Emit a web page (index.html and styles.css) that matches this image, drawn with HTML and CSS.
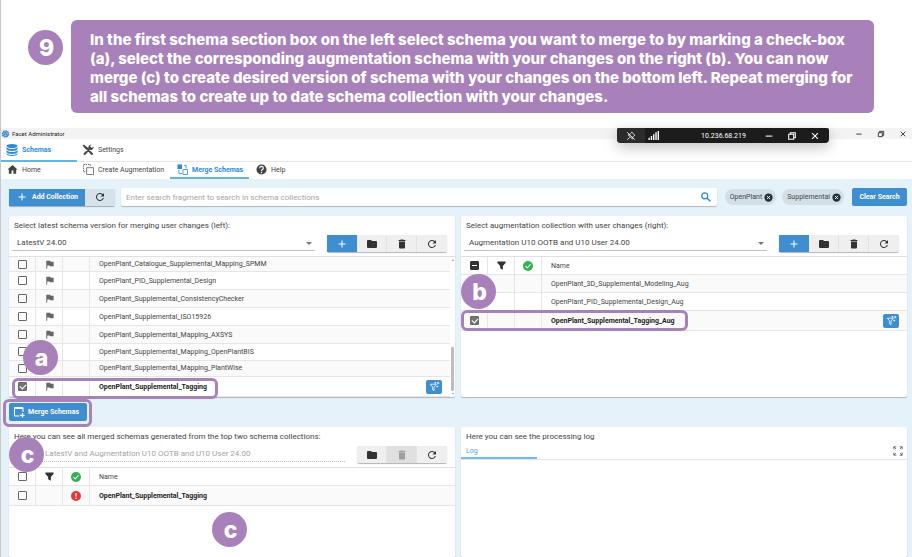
FILE: index.html
```html
<!DOCTYPE html>
<html lang="en">
<head>
    <meta charset="utf-8">
    <title>Facet Administrator - Merge Schemas</title>
    <link rel="stylesheet" href="styles.css">
</head>
<body>
    <svg class="sprite" aria-hidden="true">
        <symbol id="plus" viewBox="0 0 24 24"><path d="M19 13h-6v6h-2v-6H5v-2h6V5h2v6h6z"/></symbol>
        <symbol id="refresh" viewBox="0 0 24 24"><path d="M17.65 6.35A8 8 0 1 0 19.73 14h-2.08A6 6 0 1 1 12 6c1.66 0 3.14.69 4.22 1.78L13 11h7V4z"/></symbol>
        <symbol id="folder" viewBox="0 0 24 24"><path d="M10 4H4a2 2 0 0 0-2 2v12a2 2 0 0 0 2 2h16a2 2 0 0 0 2-2V8a2 2 0 0 0-2-2h-8z"/></symbol>
        <symbol id="trash" viewBox="0 0 24 24"><path d="M6 19a2 2 0 0 0 2 2h8a2 2 0 0 0 2-2V7H6zM19 4h-3.5l-1-1h-5l-1 1H5v2h14z"/></symbol>
        <symbol id="flag" viewBox="0 0 24 24"><path d="M14.4 6 14 4H5v17h2v-7h5.600l.4 2h8V6z"/></symbol>
        <symbol id="funnel" viewBox="0 0 24 24"><path d="M3 3h18v3l-6 7v8l-6-3v-5L3 6z"/></symbol>
        <symbol id="ok" viewBox="0 0 24 24"><circle cx="12" cy="12" r="12" fill="#2eb34f"/><path d="M6 12.500l4 4 8-8.500" fill="none" stroke="#fff" stroke-width="2.600"/></symbol>
        <symbol id="alert" viewBox="0 0 24 24"><circle cx="12" cy="12" r="12" fill="#e53935"/><path d="M10.500 5h3v9h-3zM10.500 16h3v3h-3z" fill="#fff"/></symbol>
        <symbol id="close" viewBox="0 0 24 24"><path d="M5 5l14 14M19 5L5 19" fill="none" stroke="currentColor" stroke-width="2.500"/></symbol>
        <symbol id="minimize" viewBox="0 0 24 24"><path d="M4 11h16v2.500H4z"/></symbol>
        <symbol id="restore" viewBox="0 0 24 24"><path d="M4 8h12v12H4zM8 8V4h12v12h-4" fill="none" stroke="currentColor" stroke-width="2.500"/></symbol>
        <symbol id="remove" viewBox="0 0 24 24"><circle cx="12" cy="12" r="11"/><path d="M8 8l8 8M16 8l-8 8" fill="none" stroke="#fff" stroke-width="2.500"/></symbol>
        <symbol id="magic" viewBox="0 0 24 24"><path d="M3 7h13l-5 6v8l-3-2v-6zM14 2v4M12 4h4M20 2v5M17.500 4.500h5M18 10v4M16 12h4" fill="none" stroke="currentColor" stroke-width="1.700"/></symbol>
    </svg>

    <header class="banner">
        <span class="step">9</span>
        <p>In the first schema section box on the left select schema you want to merge to by marking a check-box (a), select the corresponding augmentation schema with your changes on the right (b). You can now merge (c) to create desired version of schema with your changes on the bottom left. Repeat merging for all schemas to create up to date schema collection with your changes.</p>
    </header>

    <div class="app">
        <div class="titlebar">
            <svg class="logo" viewBox="0 0 24 24"><circle cx="12" cy="13" r="8" fill="#2478bd" stroke="#3a8fd0" stroke-width="4" stroke-dasharray="4 2"/><path d="M7 10l5-3 5 3v6l-5 3-5-3zM12 13v6M7 10l5 3 5-3" fill="none" stroke="#b9dcf5" stroke-width="1.500"/></svg>
            <span class="app-name">Facet Administrator</span>
            <div class="window-buttons">
                <button aria-label="Minimize"><svg><use href="#minimize"/></svg></button>
                <button aria-label="Restore"><svg><use href="#restore"/></svg></button>
                <button aria-label="Close"><svg><use href="#close"/></svg></button>
            </div>
            <div class="remote-bar">
                <button class="pin" aria-label="Unpin"><svg viewBox="0 0 24 24"><path d="M3 3l18 18M3 21l6-6M5 9l10 10 1-5M10 7l4-4 7 7-4 4M5 9h5" fill="none" stroke="currentColor" stroke-width="2"/></svg></button>
                <svg class="signal" viewBox="0 0 24 24"><path d="M1 17h3v5H1zM6 13h3v9H6zM11 9h3v13h-3zM16 5h3v17h-3zM21 2h3v20h-3z"/></svg>
                <span class="address">10.236.68.219</span>
                <button aria-label="Minimize session"><svg><use href="#minimize"/></svg></button>
                <button aria-label="Restore session"><svg><use href="#restore"/></svg></button>
                <button aria-label="Close session"><svg><use href="#close"/></svg></button>
            </div>
        </div>

        <nav class="tabs main-tabs">
            <a class="active" href="#"><svg viewBox="0 0 24 24"><ellipse cx="12" cy="4" rx="11" ry="4"/><path d="M1 6c2 3 6 4 11 4s9-1 11-4v4c0 5-22 5-22 0zM1 12c2 3 6 4 11 4s9-1 11-4v4c0 5-22 5-22 0zM1 18c2 3 6 4 11 4s9-1 11-4v2c0 5-22 5-22 0z"/></svg>Schemas</a>
            <a href="#"><svg viewBox="0 0 24 24"><path d="M5 20L17 8M8 7l12 13" fill="none" stroke="currentColor" stroke-width="4" stroke-linecap="round"/><path d="M1 3l3-2 7 7-3 3zM23 5l-3 3-3-1-1-3 3-3a6 6 0 0 0-6 8l3 3a6 6 0 0 0 7-7z"/></svg>Settings</a>
        </nav>
        <nav class="tabs sub-tabs">
            <a href="#"><svg viewBox="0 0 24 24"><path d="M10 21v-7h4v7h6v-9h3L12 2 1 12h3v9z"/></svg>Home</a>
            <a href="#"><svg viewBox="0 0 24 24"><path d="M8 8h15v15H8z" fill="none" stroke="currentColor" stroke-width="1.500"/><path d="M5 17H1V1h15v4" fill="none" stroke="currentColor" stroke-width="1.800" stroke-dasharray="3 2"/></svg>Create Augmentation</a>
            <a class="active" href="#"><svg viewBox="0 0 24 24"><path d="M1 1h10v10H1z"/><path d="M13 12h10v11H13zM4 13v8h7M15 3h5v7" fill="none" stroke="currentColor" stroke-width="1.800"/></svg>Merge Schemas</a>
            <a href="#"><svg viewBox="0 0 24 24"><circle cx="12" cy="12" r="11"/><path d="M8 9c0-5 8-5 8 0 0 3-4 3-4 6M12 17v3" fill="none" stroke="#fff" stroke-width="2.500"/></svg>Help</a>
        </nav>

        <main class="workspace">
            <div class="toolbar">
                <div class="button-group">
                    <button class="primary add"><svg><use href="#plus"/></svg>Add Collection</button>
                    <button class="soft" aria-label="Reload collections"><svg><use href="#refresh"/></svg></button>
                </div>
                <label class="search">
                    <input type="text" aria-label="Search" placeholder="Enter search fragment to search in schema collections">
                    <svg viewBox="0 0 24 24"><circle cx="9.500" cy="9.500" r="6" fill="none" stroke="currentColor" stroke-width="2.500"/><path d="M14 14l7 7" stroke="currentColor" stroke-width="3"/></svg>
                </label>
                <div class="chips">
                    <span class="chip">OpenPlant<button aria-label="Remove OpenPlant"><svg><use href="#remove"/></svg></button></span>
                    <span class="chip">Supplemental<button aria-label="Remove Supplemental"><svg><use href="#remove"/></svg></button></span>
                </div>
                <button class="primary clear">Clear Search</button>
            </div>

            <div class="columns">
                <section class="panel">
                    <label class="panel-title" for="latest">Select latest schema version for merging user changes (left):</label>
                    <div class="picker">
                        <div class="select"><select id="latest"><option>LatestV 24.00</option></select></div>
                        <div class="button-group">
                            <button class="primary" aria-label="Add"><svg><use href="#plus"/></svg></button>
                            <button aria-label="Open"><svg><use href="#folder"/></svg></button>
                            <button aria-label="Delete"><svg><use href="#trash"/></svg></button>
                            <button aria-label="Reload"><svg><use href="#refresh"/></svg></button>
                        </div>
                    </div>
                    <div class="list">
                        <table class="schemas scrolled">
                            <tr class="cut shaded"><td><input type="checkbox" aria-label="Select"></td><td><svg><use href="#flag"/></svg></td><td></td><td>OpenPlant_Catalogue_Supplemental_Mapping_SPMM</td></tr>
                            <tr><td><input type="checkbox" aria-label="Select"></td><td><svg><use href="#flag"/></svg></td><td></td><td>OpenPlant_PID_Supplemental_Design</td></tr>
                            <tr class="shaded"><td><input type="checkbox" aria-label="Select"></td><td><svg><use href="#flag"/></svg></td><td></td><td>OpenPlant_Supplemental_ConsistencyChecker</td></tr>
                            <tr><td><input type="checkbox" aria-label="Select"></td><td><svg><use href="#flag"/></svg></td><td></td><td>OpenPlant_Supplemental_ISO15926</td></tr>
                            <tr class="shaded"><td><input type="checkbox" aria-label="Select"></td><td><svg><use href="#flag"/></svg></td><td></td><td>OpenPlant_Supplemental_Mapping_AXSYS</td></tr>
                            <tr><td><input type="checkbox" aria-label="Select"></td><td></td><td></td><td>OpenPlant_Supplemental_Mapping_OpenPlantBIS</td></tr>
                            <tr class="shaded"><td><input type="checkbox" aria-label="Select"></td><td></td><td></td><td>OpenPlant_Supplemental_Mapping_PlantWise</td></tr>
                            <tr class="selected"><td><input type="checkbox" aria-label="Select" checked></td><td><svg><use href="#flag"/></svg></td><td></td><td><div class="cell">OpenPlant_Supplemental_Tagging<button class="primary magic" aria-label="Filter"><svg><use href="#magic"/></svg></button></div></td></tr>
                        </table>
                        <div class="scrollbar"><i></i></div>
                    </div>
                    <span class="outline outline-a"></span>
                    <span class="step mark mark-a">a</span>
                </section>

                <section class="panel">
                    <label class="panel-title" for="augmentation">Select augmentation collection with user changes (right):</label>
                    <div class="picker">
                        <div class="select"><select id="augmentation"><option>Augmentation U10 OOTB and U10 User 24.00</option></select></div>
                        <div class="button-group">
                            <button class="primary" aria-label="Add"><svg><use href="#plus"/></svg></button>
                            <button aria-label="Open"><svg><use href="#folder"/></svg></button>
                            <button aria-label="Delete"><svg><use href="#trash"/></svg></button>
                            <button aria-label="Reload"><svg><use href="#refresh"/></svg></button>
                        </div>
                    </div>
                    <div class="list">
                        <table class="schemas">
                            <tr><th><input class="partial" type="checkbox" aria-label="Select all"></th><th><svg><use href="#funnel"/></svg></th><th><svg class="state"><use href="#ok"/></svg></th><th>Name</th></tr>
                            <tr class="shaded"><td></td><td></td><td></td><td>OpenPlant_3D_Supplemental_Modeling_Aug</td></tr>
                            <tr><td></td><td></td><td></td><td>OpenPlant_PID_Supplemental_Design_Aug</td></tr>
                            <tr class="selected shaded"><td><input type="checkbox" aria-label="Select" checked></td><td></td><td></td><td><div class="cell">OpenPlant_Supplemental_Tagging_Aug<button class="primary magic" aria-label="Filter"><svg><use href="#magic"/></svg></button></div></td></tr>
                        </table>
                    </div>
                    <span class="outline outline-b"></span>
                    <span class="step mark mark-b">b</span>
                </section>
            </div>

            <div class="merge-row">
                <div class="merge-wrap">
                    <button class="primary merge"><svg viewBox="0 0 24 24"><path d="M13 20H3V3h17v9M3 5h17" fill="none" stroke="currentColor" stroke-width="2"/><path d="M19 14v9M14 18.500h9" stroke="currentColor" stroke-width="2.500"/></svg>Merge Schemas</button>
                    <span class="outline outline-c"></span>
                </div>
            </div>

            <div class="columns results">
                <section class="panel">
                    <label class="panel-title" for="merged">Here you can see all merged schemas generated from the top two schema collections:</label>
                    <div class="picker">
                        <div class="select disabled"><select id="merged" disabled><option>LatestV and Augmentation U10 OOTB and U10 User 24.00</option></select></div>
                        <div class="button-group">
                            <button aria-label="Open"><svg><use href="#folder"/></svg></button>
                            <button aria-label="Delete" disabled><svg><use href="#trash"/></svg></button>
                            <button aria-label="Reload"><svg><use href="#refresh"/></svg></button>
                        </div>
                    </div>
                    <div class="list">
                        <table class="schemas">
                            <tr><th><input type="checkbox" aria-label="Select all"></th><th><svg><use href="#funnel"/></svg></th><th><svg class="state"><use href="#ok"/></svg></th><th>Name</th></tr>
                            <tr class="selected shaded"><td><input type="checkbox" aria-label="Select"></td><td></td><td><svg class="state"><use href="#alert"/></svg></td><td>OpenPlant_Supplemental_Tagging</td></tr>
                        </table>
                    </div>
                    <span class="step mark mark-c">c</span>
                    <span class="step mark mark-result">c</span>
                </section>

                <section class="panel">
                    <h2 class="panel-title">Here you can see the processing log</h2>
                    <div class="log-tabs">
                        <a class="active" href="#">Log</a>
                        <button aria-label="Expand"><svg viewBox="0 0 24 24"><path d="M2 8V2h6M2 2l5 5M16 2h6v6M22 2l-5 5M2 16v6h6M2 22l5-5M22 16v6h-6M22 22l-5-5" fill="none" stroke="currentColor" stroke-width="2"/></svg></button>
                    </div>
                </section>
            </div>
        </main>
    </div>
</body>
</html>
```

FILE: styles.css
```css
* {
    box-sizing: border-box;
}
body {
    margin: 0;
    min-height: 100vh;
    display: flex;
    flex-direction: column;
    border-left: 1px solid #c8c8c8;
    background: #ffffff;
    color: #444444;
    font-family: Roboto, "Liberation Sans", sans-serif;
    font-size: 7px;
}
button, input, select {
    font: inherit;
    color: inherit;
}
button {
    display: flex;
    align-items: center;
    justify-content: center;
    padding: 0;
    border: 0;
    background: none;
}
svg {
    width: 12px;
    height: 12px;
    fill: currentColor;
    flex: none;
}
.sprite {
    position: absolute;
    width: 0;
    height: 0;
}

/* instruction banner */
.banner {
    display: flex;
    align-items: flex-start;
    padding: 20px 38px 15px 27px;
}
.banner .step {
    margin: 10px 8px 0 0;
}
.banner p {
    flex: 1;
    margin: 0;
    padding: 10px 10px 7px 19px;
    border-radius: 6px;
    background: #a881bb;
    color: #ffffff;
    font: 800 15px/19px Inter, sans-serif;
}
.step {
    display: flex;
    align-items: center;
    justify-content: center;
    flex: none;
    width: 35px;
    height: 35px;
    padding: 1px 0 0 2px;
    border-radius: 50%;
    background: #a881bb;
    color: #ffffff;
    font: 800 23px/23px Inter, sans-serif;
}
.mark {
    position: absolute;
    z-index: 3;
}
.outline {
    position: absolute;
    z-index: 2;
    border: 3px solid #a881bb;
    border-radius: 6px;
    pointer-events: none;
}

/* window */
.app {
    flex: 1;
    display: flex;
    flex-direction: column;
}
.titlebar {
    position: relative;
    display: flex;
    align-items: center;
    height: 11px;
    background: #f3f3f3;
    color: #222222;
    font-size: 6px;
}
.titlebar .logo {
    width: 9px;
    height: 9px;
    margin-right: 2px;
}
.window-buttons {
    display: flex;
    margin-left: auto;
    padding-right: 5px;
    gap: 14px;
}
.window-buttons svg {
    width: 8px;
    height: 8px;
}
.remote-bar {
    position: absolute;
    top: 0;
    right: 83px;
    display: flex;
    align-items: center;
    width: 212px;
    height: 15px;
    padding-right: 9px;
    border-radius: 2px 2px 4px 4px;
    background: #1c1c1c;
    color: #ffffff;
    font-size: 7px;
    box-shadow: 0 4px 14px rgba(0, 0, 0, 0.25);
}
.remote-bar svg {
    width: 10px;
    height: 10px;
}
.remote-bar .pin {
    width: 28px;
    height: 15px;
    border-radius: 2px 0 0 4px;
    background: #2c2c2c;
}
.remote-bar .signal {
    width: 11px;
    height: 11px;
    margin-left: 3px;
}
.remote-bar .address {
    margin: 0 auto;
    padding-left: 24px;
}
.remote-bar button + button {
    margin-left: 13px;
}
.tabs {
    display: flex;
    border-bottom: 1px solid #e6e6e6;
}
.tabs a {
    display: flex;
    align-items: center;
    gap: 4px;
    border-bottom: 2px solid transparent;
    color: #444444;
    text-decoration: none;
}
.tabs .active {
    border-color: #64b5dc;
    color: #2e8bd6;
    font-weight: bold;
}
.main-tabs {
    height: 23px;
}
.main-tabs a {
    width: 76px;
    margin-bottom: -1px;
    padding-left: 5px;
}
.sub-tabs {
    height: 17px;
    border: 0;
}
.sub-tabs a {
    padding: 0 6px 0 7px;
}
.sub-tabs a:first-child {
    width: 75px;
    padding-left: 6px;
}
.sub-tabs svg {
    width: 11px;
    height: 11px;
}

/* workspace */
.workspace {
    flex: 1;
    display: flex;
    flex-direction: column;
    padding: 9px 5px 0 8px;
    background: #e5f2fa;
}
.toolbar {
    display: flex;
    align-items: center;
    height: 18px;
    margin-bottom: 10px;
}
.button-group {
    display: flex;
    height: 17px;
    border-radius: 2px;
    box-shadow: 0 1px 1px rgba(0, 0, 0, 0.3);
}
.button-group button {
    width: 30px;
    background: #efefef;
    color: #333333;
    border-right: 1px solid #e2e2e2;
}
.button-group button:last-child {
    border-right: 0;
}
.button-group button:disabled {
    background: #e0e0e0;
    color: #9e9e9e;
}
button.primary,
.button-group .primary {
    border: 0;
    background: #3f8ed0;
    color: #ffffff;
    font-weight: bold;
}
.button-group .soft {
    background: #d5e2ea;
}
.button-group .add {
    width: 76px;
    gap: 4px;
}
.search {
    flex: 1;
    display: flex;
    align-items: center;
    height: 18px;
    margin: 0 8px 0 6px;
    padding: 0 5px;
    border-radius: 2px;
    background: #ffffff;
    color: #2e8bd6;
    box-shadow: 0 1px 1px rgba(0, 0, 0, 0.25);
}
.search input {
    flex: 1;
    padding: 0;
    border: 0;
    outline: 0;
    background: none;
    font-size: 8px;
}
.search input::placeholder {
    color: #a6a6a6;
}
.chips {
    display: flex;
    gap: 6px;
    margin-right: 8px;
}
.chip {
    display: flex;
    align-items: center;
    gap: 2px;
    height: 16px;
    padding: 0 3px 0 5px;
    border-radius: 8px;
    background: #d3dfe7;
}
.chip svg {
    width: 9px;
    height: 9px;
    color: #263238;
}
.clear {
    width: 55px;
    height: 18px;
    border-radius: 2px;
}
.columns {
    display: grid;
    grid-template-columns: 1fr 1fr;
    gap: 6px;
}
.results {
    flex: 1;
}
.panel {
    position: relative;
    padding-top: 4px;
    border-radius: 2px;
    background: #ffffff;
    box-shadow: 0 1px 1px rgba(0, 0, 0, 0.25);
}
.panel-title {
    display: block;
    margin: 0 0 4px;
    padding-left: 5px;
    font-size: 8px;
    font-weight: normal;
    line-height: 11px;
}
.picker {
    display: flex;
    gap: 12px;
    padding: 0 8px 0 3px;
    margin-bottom: 4px;
}
.select {
    position: relative;
    flex: 1;
    height: 16px;
    border-bottom: 1px solid #c4c4c4;
}
.select::after {
    content: "";
    position: absolute;
    top: 7px;
    right: 3px;
    border: 3px solid transparent;
    border-top-color: #777777;
    border-bottom: 0;
}
.select select {
    width: 100%;
    height: 15px;
    padding: 0 5px;
    border: 0;
    appearance: none;
    background: none;
    font-size: 8px;
}
.select.disabled {
    border-bottom-style: dotted;
}
.select.disabled::after {
    display: none;
}
.select.disabled select {
    padding-left: 33px;
    color: #a3a3a3;
    opacity: 1;
}

/* schema lists */
.list {
    display: flex;
    border-top: 1px solid #e0e0e0;
}
.schemas {
    flex: 1;
    border-collapse: separate;
    border-spacing: 0;
    table-layout: fixed;
}
.schemas td,
.schemas th {
    height: 18px;
    padding: 0 0 0 9px;
    border-bottom: 1px solid #e6e6e6;
    font-weight: normal;
    line-height: 10px;
    text-align: left;
}
.schemas td:not(:last-child),
.schemas th:not(:last-child) {
    width: 27px;
    padding: 0;
    border-right: 1px solid #e6e6e6;
    text-align: center;
}
.schemas svg {
    display: block;
    width: 11px;
    height: 11px;
    margin: 0 auto;
    color: #666666;
}
.schemas th svg {
    color: #333333;
}
.schemas .state {
    width: 10px;
    height: 10px;
}
.schemas .shaded {
    background: #fafafa;
}
.schemas .selected td {
    height: 20px;
    color: #222222;
    font-weight: bold;
}
.scrolled {
    height: 140px;
}
.scrolled td {
    height: auto;
}
.scrolled .cut td {
    height: 15px;
}
.cell {
    display: flex;
    align-items: center;
    justify-content: space-between;
    padding-right: 8px;
}
.schemas .magic {
    width: 16px;
    height: 14px;
    border-radius: 2px;
}
.schemas .magic svg {
    color: #ffffff;
}
input[type="checkbox"] {
    display: block;
    position: relative;
    width: 9px;
    height: 9px;
    margin: 0 auto;
    border: 1px solid #666666;
    border-radius: 1px;
    appearance: none;
}
input[type="checkbox"]:checked {
    background: #757575;
}
input[type="checkbox"]:checked::after {
    content: "";
    position: absolute;
    top: 0;
    left: 2px;
    width: 3px;
    height: 5px;
    border: solid #ffffff;
    border-width: 0 1px 1px 0;
    transform: rotate(45deg);
}
input[type="checkbox"].partial {
    border-color: #333333;
    background: #333333;
}
input.partial::after {
    content: "";
    position: absolute;
    top: 3px;
    left: 1px;
    width: 5px;
    height: 1px;
    background: #ffffff;
}
.scrollbar {
    display: flex;
    flex-direction: column;
    align-items: center;
    justify-content: space-between;
    width: 5px;
    padding: 2px 0;
}
.scrollbar::before,
.scrollbar::after {
    content: "";
    border: 1px solid transparent;
    border-bottom: 2px solid #999999;
    border-top: 0;
}
.scrollbar::after {
    border-top: 2px solid #999999;
    border-bottom: 0;
}
.scrollbar i {
    width: 3px;
    height: 44px;
    margin: auto 0 2px;
    border-radius: 1px;
    background: #bdbdbd;
}

.merge-row {
    padding: 6px 0;
}
.merge-wrap {
    position: relative;
    width: 78px;
}
.merge {
    width: 100%;
    height: 18px;
    padding-right: 4px;
    gap: 3px;
    border-radius: 2px;
}
.log-tabs {
    display: flex;
    justify-content: space-between;
    height: 14px;
    border-bottom: 1px solid #e6e6e6;
}
.log-tabs a {
    width: 76px;
    padding-left: 5px;
    border-bottom: 2px solid #74bbee;
    color: #4aa3e0;
    line-height: 10px;
    text-decoration: none;
}
.log-tabs button {
    width: 18px;
    height: 10px;
    color: #555555;
}
.log-tabs svg {
    width: 10px;
    height: 10px;
}

/* markers over the panels */
.outline-a {
    left: 3px;
    top: 162px;
    width: 206px;
    height: 21px;
}
.outline-b {
    left: 0;
    top: 94px;
    width: 227px;
    height: 21px;
}
.outline-c {
    left: -6px;
    top: -4px;
    width: 89px;
    height: 28px;
}
.mark-a {
    left: 14px;
    top: 124px;
}
.mark-b {
    left: 0;
    top: 58px;
}
.mark-c {
    left: 0;
    top: 10px;
}
.mark-result {
    left: 203px;
    top: 85px;
}
```
